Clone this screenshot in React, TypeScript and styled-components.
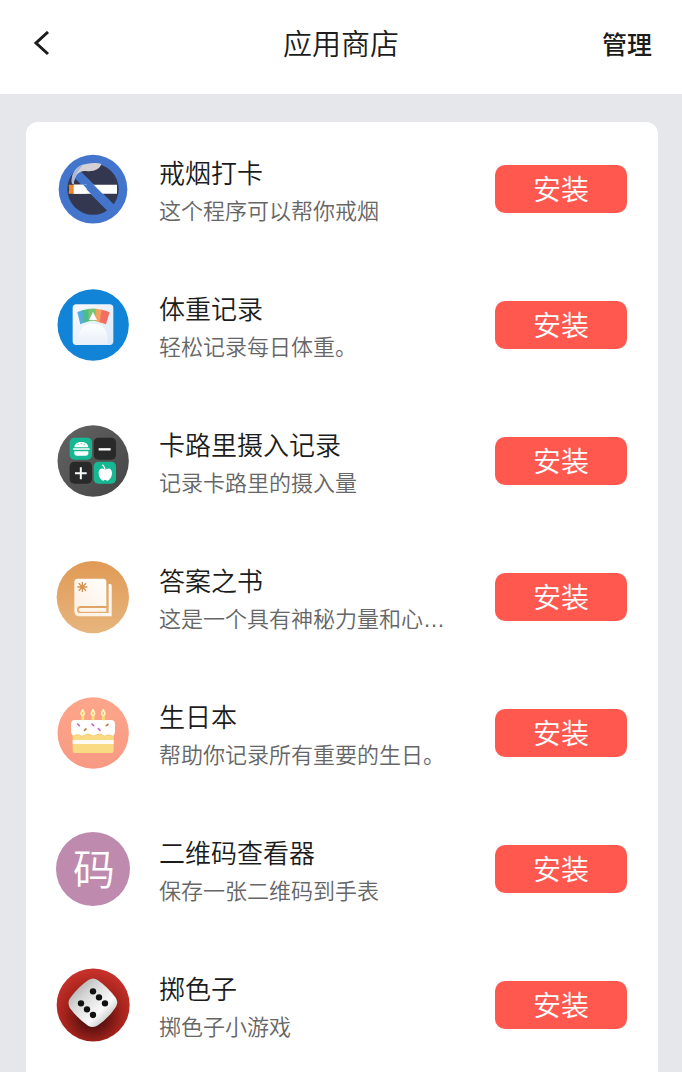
import React from 'react';
import styled, { createGlobalStyle } from 'styled-components';

const GlobalStyle = createGlobalStyle`
  * { box-sizing: border-box; }
  html { scrollbar-width: none; }
  body {
    margin: 0;
    background: #e5e7eb;
    color: #1c1c1c;
    font-family: "Liberation Sans", "Noto Sans CJK SC", sans-serif;
    font-weight: 350;
  }
`;

const Header = styled.header`
  display: grid;
  grid-template-columns: 1fr auto 1fr;
  align-items: center;
  height: 94px;
  padding: 0 30px 4px;
  background: #fff;
`;

const BackButton = styled.button`
  justify-self: start;
  display: flex;
  padding: 0;
  border: 0;
  background: none;
  color: #1c1c1c;
  cursor: pointer;
`;

const Title = styled.h1`
  margin: 0;
  font-size: 29px;
  line-height: 40px;
  font-weight: 350;
`;

const ManageLink = styled.a`
  justify-self: end;
  color: #1c1c1c;
  font-size: 25px;
  line-height: 40px;
  font-weight: 500;
  text-decoration: none;
`;

const Main = styled.main`
  padding: 28px 24px 0 26px;
`;

const AppList = styled.ul`
  margin: 0;
  padding: 0;
  list-style: none;
  border-radius: 12px 12px 0 0;
  background: #fff;
`;

const AppRow = styled.li`
  display: flex;
  align-items: center;
  gap: 29px;
  height: 136px;
  padding: 0 31px 3px 30px;
`;

const IconBox = styled.div`
  flex: none;
  width: 74px;
  height: 74px;

  svg { display: block; width: 100%; height: 100%; }
`;

const LetterIcon = styled.div`
  display: flex;
  align-items: center;
  justify-content: center;
  width: 100%;
  height: 100%;
  padding: 4px 0 0 2px;
  border-radius: 50%;
  background: #be8bae;
  color: #fff;
  font-size: 42px;
  line-height: 42px;
`;

const AppText = styled.div`
  flex: 1;
  min-width: 0;
  padding-top: 6px;
`;

const AppName = styled.h2`
  margin: 0;
  font-size: 26px;
  line-height: 40px;
  font-weight: 350;
`;

const AppDesc = styled.p`
  margin: 0;
  overflow: hidden;
  color: #666;
  font-size: 22px;
  line-height: 36px;
  white-space: nowrap;
  text-overflow: ellipsis;
`;

const InstallButton = styled.button`
  flex: none;
  width: 132px;
  height: 48px;
  padding: 4px 0 0;
  border: 0;
  border-radius: 10px;
  background: #ff584f;
  color: #fff;
  font-family: inherit;
  font-size: 28px;
  line-height: 44px;
  font-weight: 350;
  cursor: pointer;
`;

const NoSmokingIcon = () => (
  <svg viewBox="19 22 222 222" aria-hidden="true">
    <circle cx="130" cy="133.5" r="103" fill="#4475cc" />
    <circle cx="130" cy="133.5" r="77" fill="#333850" />
    <path d="M80 86L184 190" stroke="#4475cc" strokeWidth="27" />
    <path d="M71 120H202V147H136L110 120H112L138 147H71Z" fill="#fff" />
    <path d="M100 106L176 182" stroke="#4475cc" strokeWidth="25" />
    <rect x="71" y="120" width="40" height="27" fill="#fff" />
    <path d="M100 120H116L143 147H127Z" fill="#4475cc" />
    <path d="M57 120H72V147H57Q60 133 57 120Z" fill="#e98a2d" />
    <path d="M67 118C62 88 80 62 109 58C127 54 145 55 155 58C151 73 133 82 109 79C91 77 75 88 72 118Z" fill="#d5d1d4" />
    <path d="M67 118C62 90 78 66 100 60C92 72 76 86 72 118Z" fill="#a9b9dc" />
  </svg>
);

const ScaleIcon = () => (
  <svg viewBox="19 25 222 222" aria-hidden="true">
    <defs>
      <linearGradient id="plate" x1="0" y1="0" x2="1" y2="1">
        <stop offset="0" stopColor="#f7fafd" />
        <stop offset="1" stopColor="#dbe9f7" />
      </linearGradient>
      <linearGradient id="dome" x1="0" y1="0" x2="0" y2="1">
        <stop offset="0" stopColor="#fff" />
        <stop offset="1" stopColor="#e7eff9" />
      </linearGradient>
    </defs>
    <circle cx="130.5" cy="136" r="107" fill="#1184d8" />
    <rect x="69" y="74" width="122" height="122" rx="11" fill="url(#plate)" />
    <path d="M83 97L101 91L108 127L92 134Z" fill="#57aede" />
    <path d="M98 92L120 87V124L104 129Z" fill="#49bd8b" />
    <path d="M116 88Q130 85 143 88V125Q130 121 117 125Z" fill="#7cc474" />
    <path d="M138 87L158 90L153 129L138 124Z" fill="#f3a15c" />
    <path d="M156 90Q169 92 180 98L169 134L150 128Z" fill="#f16f62" />
    <path d="M130 97L142 121H118Z" fill="#fff" />
    <path d="M86 180Q86 146 109 136Q130 128 151 136Q174 146 174 180V194H86Z" fill="url(#dome)" />
  </svg>
);

const CalorieIcon = () => (
  <svg viewBox="19 26 222 222" aria-hidden="true">
    <defs>
      <linearGradient id="graphite" x1="0" y1="0" x2="1" y2="1">
        <stop offset="0" stopColor="#646464" />
        <stop offset="1" stopColor="#444" />
      </linearGradient>
    </defs>
    <circle cx="130.5" cy="137" r="107" fill="url(#graphite)" />
    <rect x="60" y="67" width="67" height="66" rx="14" fill="#16b894" />
    <rect x="132" y="67" width="67" height="66" rx="14" fill="#292929" />
    <rect x="60" y="139" width="67" height="66" rx="14" fill="#292929" />
    <rect x="132" y="139" width="67" height="66" rx="14" fill="#16b894" />
    <path d="M147 102H183" stroke="#fff" strokeWidth="7" />
    <path d="M76 174H111M93.5 156V192" stroke="#fff" strokeWidth="6" />
    <path d="M74 96C75 84 84 80 95 80C106 80 115 84 116 96Z" fill="#fff" />
    <path d="M72 101H118" stroke="#fff" strokeWidth="5" strokeLinecap="round" />
    <path d="M74 108H116V114Q116 121 108 121H82Q74 121 74 114Z" fill="#fff" />
    <path d="M84 88H88M93 85H97M102 88H106" stroke="#16b894" strokeWidth="2" />
    <path d="M165 162C158 157 147 158 147 173C147 187 156 196 160 196C163 196 164 194 166 194C169 194 170 196 173 196C179 196 187 185 187 173C187 158 175 157 169 162Q167 163 165 162Z" fill="#fff" />
    <path d="M166 161C165 156 162 151 158 148" fill="none" stroke="#fff" strokeWidth="4" />
  </svg>
);

const BookIcon = () => (
  <svg viewBox="19 26 222 222" aria-hidden="true">
    <defs>
      <linearGradient id="amber" x1="0" y1="0" x2="0" y2="1">
        <stop offset="0" stopColor="#e09a55" />
        <stop offset="1" stopColor="#e7b57d" />
      </linearGradient>
      <linearGradient id="cover" x1="1" y1="0" x2="0" y2="1">
        <stop offset="0" stopColor="#fff" />
        <stop offset="1" stopColor="#fdeee0" />
      </linearGradient>
    </defs>
    <circle cx="129.5" cy="137.5" r="108.5" fill="url(#amber)" />
    <path d="M84 82H161Q170 82 170 91V164H91Q82 165 82 175Q82 185 92 185H177V98H182Q186 98 186 103V195H87Q74 194 74 180V92Q74 82 84 82Z" fill="url(#cover)" />
    <path d="M93 170H170V181H93Q87 181 87 175.5Q87 170 93 170Z" fill="#fff5eb" />
    <path d="M90 167H172" stroke="#dfa267" strokeWidth="6" />
    <path d="M98 92V122M83 107H113M87 96L109 118M109 96L87 118" stroke="#d8924e" strokeWidth="4" />
    <circle cx="98" cy="107" r="5" fill="#d8924e" />
  </svg>
);

const CakeIcon = () => (
  <svg viewBox="19 25 222 222" aria-hidden="true">
    <defs>
      <linearGradient id="peach" x1="0" y1="0" x2="0" y2="1">
        <stop offset="0" stopColor="#fda68b" />
        <stop offset="1" stopColor="#f89983" />
      </linearGradient>
    </defs>
    <circle cx="130.5" cy="136" r="107" fill="url(#peach)" />
    <rect x="69" y="132" width="123" height="64" rx="7" fill="#f9db83" />
    <rect x="69" y="157" width="123" height="12" fill="#fffaf3" />
    <path d="M76 97H184Q196 97 196 109V130Q196 145 185 144Q178 140 172 143Q164 149 156 141Q148 136 140 142Q131 149 121 141Q113 136 105 143Q96 149 88 142Q81 139 74 144Q64 143 64 130V109Q64 97 76 97Z" fill="#fff" />
    <path d="M72 145Q81 139 88 142Q96 149 105 143Q113 136 121 141Q131 149 140 142Q148 136 156 141Q164 149 172 143Q179 140 187 145" fill="none" stroke="#f5ca70" strokeWidth="3" />
    <path d="M99 83V98M130 83V98M161 83V98" stroke="#f8dd7c" strokeWidth="9" />
    <path d="M99 64Q87 83 99 84Q111 83 99 64ZM130 64Q118 83 130 84Q142 83 130 64ZM161 64Q149 83 161 84Q173 83 161 64Z" fill="#fdf2c2" stroke="#fdf2c2" strokeWidth="3" />
    <path d="M99 75V79M130 75V79M161 75V79" stroke="#f2c34d" strokeWidth="4" strokeLinecap="round" />
    <path d="M84 109L89 114M127 109L132 114M146 123L151 128" stroke="#c66bc0" strokeWidth="5" strokeLinecap="round" />
    <path d="M104 128L109 124M170 114L175 110" stroke="#c17a43" strokeWidth="5" strokeLinecap="round" />
  </svg>
);

const DiceIcon = () => (
  <svg viewBox="19 26 222 222" aria-hidden="true">
    <defs>
      <radialGradient id="felt" cx="0.5" cy="0.64" r="0.6">
        <stop offset="0.2" stopColor="#4e0f0d" />
        <stop offset="0.65" stopColor="#a5231c" />
        <stop offset="1" stopColor="#c5302a" />
      </radialGradient>
      <linearGradient id="ivory" x1="0.1" y1="0.1" x2="0.9" y2="0.9">
        <stop offset="0" stopColor="#a9a9a9" />
        <stop offset="0.3" stopColor="#d6d6d6" />
        <stop offset="0.7" stopColor="#fafafa" />
        <stop offset="1" stopColor="#b5b5b5" />
      </linearGradient>
    </defs>
    <circle cx="130.5" cy="137" r="109.5" fill="url(#felt)" />
    <path d="M116 62Q130 53 144 62Q175 84 198 115Q207 128 199 142Q177 176 145 198Q130 208 115 199Q84 178 60 145Q53 130 60 118Q83 85 116 62Z" fill="url(#ivory)" />
    <g fill="#111">
      <circle cx="130" cy="96" r="9.5" />
      <circle cx="148" cy="114" r="9.5" />
      <circle cx="166" cy="132" r="9.5" />
      <circle cx="94" cy="132" r="9.5" />
      <circle cx="112" cy="150" r="9.5" />
      <circle cx="130" cy="167" r="9.5" />
    </g>
  </svg>
);

const apps = [
  { name: '戒烟打卡', desc: '这个程序可以帮你戒烟', icon: <NoSmokingIcon /> },
  { name: '体重记录', desc: '轻松记录每日体重。', icon: <ScaleIcon /> },
  { name: '卡路里摄入记录', desc: '记录卡路里的摄入量', icon: <CalorieIcon /> },
  { name: '答案之书', desc: '这是一个具有神秘力量和心…', icon: <BookIcon /> },
  { name: '生日本', desc: '帮助你记录所有重要的生日。', icon: <CakeIcon /> },
  { name: '二维码查看器', desc: '保存一张二维码到手表', icon: <LetterIcon aria-hidden="true">码</LetterIcon> },
  { name: '掷色子', desc: '掷色子小游戏', icon: <DiceIcon /> },
];

export default function App() {
  return (
    <div lang="zh-CN">
      <GlobalStyle />
      <Header>
        <BackButton type="button" aria-label="返回">
          <svg width="24" height="28" viewBox="0 0 24 28" fill="none" stroke="currentColor" strokeWidth="3">
            <path d="M18 1L6 12L18 23" />
          </svg>
        </BackButton>
        <Title>应用商店</Title>
        <ManageLink href="#manage">管理</ManageLink>
      </Header>
      <Main>
        <AppList>
          {apps.map((app) => (
            <AppRow key={app.name}>
              <IconBox>{app.icon}</IconBox>
              <AppText>
                <AppName>{app.name}</AppName>
                <AppDesc>{app.desc}</AppDesc>
              </AppText>
              <InstallButton type="button" aria-label={`安装 ${app.name}`}>安装</InstallButton>
            </AppRow>
          ))}
        </AppList>
      </Main>
    </div>
  );
}
